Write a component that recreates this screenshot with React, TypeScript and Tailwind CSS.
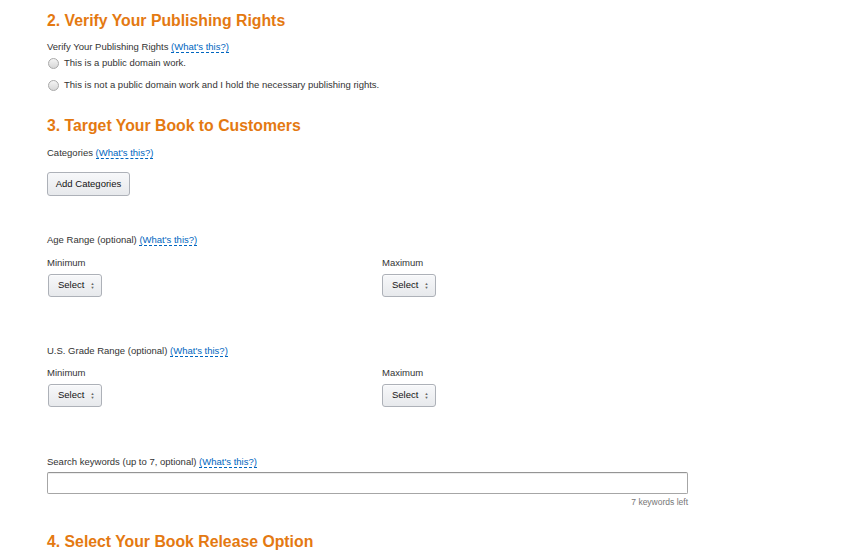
import React from "react";

const font = { fontFamily: '"Liberation Sans", Arial, sans-serif' };

function WhatsThis() {
  return (
    <a className="text-[#0066c0] border-b border-dashed border-[#0066c0] leading-[11px] cursor-pointer">
      (What's this?)
    </a>
  );
}

function Heading({ children, className }: { children: React.ReactNode; className?: string }) {
  return (
    <h2 className={`text-[15.8px] leading-[22px] font-bold text-[#e47911] ${className ?? ""}`}>{children}</h2>
  );
}

function Radio({ label, className }: { label: string; className?: string }) {
  return (
    <label className={`flex items-center h-4 ${className ?? ""}`}>
      <span className="ml-[1px] w-[11px] h-[11px] rounded-full border border-[#a9a9a9] bg-gradient-to-b from-[#f4f4f4] to-[#d7d7d7]" />
      <span className="ml-[5px]">{label}</span>
    </label>
  );
}

function SelectBox({ className }: { className?: string }) {
  return (
    <button className={`w-[54px] h-[23px] flex items-center pl-[9px] rounded-[3px] border border-[#adb1b8] bg-gradient-to-b from-[#f7f8fa] to-[#e7e9ec] text-[#111] shadow-[0_1px_0_rgba(255,255,255,0.6)_inset] ${className ?? ""}`}>
      <span>Select</span>
      <span className="ml-[6px] flex flex-col items-center leading-none text-[4px] text-[#666]">
        <span>▲</span>
        <span>▼</span>
      </span>
    </button>
  );
}

function RangeRow({ className }: { className?: string }) {
  return (
    <div className={`grid grid-cols-[335px_1fr] ${className ?? ""}`}>
      <div>
        <div className="leading-[14px]">Minimum</div>
        <SelectBox className="mt-[4px] ml-[1px]" />
      </div>
      <div>
        <div className="leading-[14px]">Maximum</div>
        <SelectBox className="mt-[4px]" />
      </div>
    </div>
  );
}

export default function App() {
  return (
    <div style={font} className="w-[841px] h-[556px] overflow-hidden bg-white text-[9.5px] text-[#333]">
      <div className="pl-[47px] pt-[10px] w-[688px]">
        <Heading>2. Verify Your Publishing Rights</Heading>
        <div className="mt-[8px] leading-[14px]">
          Verify Your Publishing Rights <WhatsThis />
        </div>
        <Radio className="mt-[1px]" label="This is a public domain work." />
        <Radio className="mt-[6px]" label="This is not a public domain work and I hold the necessary publishing rights." />

        <Heading className="mt-[22px]">3. Target Your Book to Customers</Heading>
        <div className="mt-[9px] leading-[14px]">
          Categories <WhatsThis />
        </div>
        <button className="mt-[12px] h-[24px] w-[83px] rounded-[3px] border border-[#adb1b8] bg-gradient-to-b from-[#f7f8fa] to-[#e7e9ec] text-[#111]">
          Add Categories
        </button>

        <div className="mt-[37px] leading-[14px]">
          Age Range (optional) <WhatsThis />
        </div>
        <RangeRow className="mt-[9px]" />

        <div className="mt-[47px] leading-[14px]">
          U.S. Grade Range (optional) <WhatsThis />
        </div>
        <RangeRow className="mt-[8px]" />

        <div className="mt-[48px] leading-[14px]">
          Search keywords (up to 7, optional) <WhatsThis />
        </div>
        <input
          type="text"
          className="mt-[3px] block w-[641px] h-[22px] border border-[#a6a6a6] border-t-[#949494] rounded-[2px] bg-white outline-none shadow-[0_1px_0_rgba(0,0,0,0.07)_inset]"
        />
        <div className="mt-[3px] w-[641px] text-right text-[8.5px] leading-[10px] text-[#767676]">7 keywords left</div>

        <Heading className="mt-[24px]">4. Select Your Book Release Option</Heading>
      </div>
    </div>
  );
}
